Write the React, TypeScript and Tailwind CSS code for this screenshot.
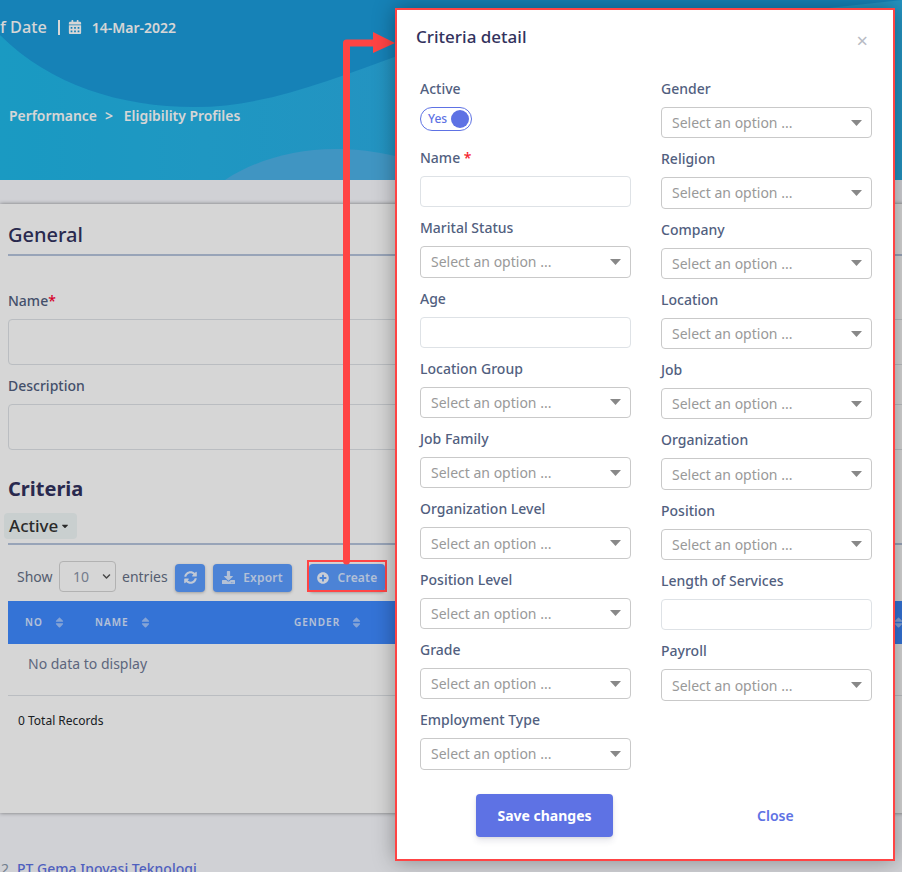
import { FaCalendarAlt, FaDownload, FaPlusCircle, FaSort, FaSyncAlt, FaCaretDown, FaChevronDown } from "react-icons/fa";

const leftFields = [
  { label: "Marital Status", kind: "select" },
  { label: "Age", kind: "input" },
  { label: "Location Group", kind: "select" },
  { label: "Job Family", kind: "select" },
  { label: "Organization Level", kind: "select" },
  { label: "Position Level", kind: "select" },
  { label: "Grade", kind: "select" },
  { label: "Employment Type", kind: "select" },
];

const rightFields = [
  { label: "Gender", kind: "select" },
  { label: "Religion", kind: "select" },
  { label: "Company", kind: "select" },
  { label: "Location", kind: "select" },
  { label: "Job", kind: "select" },
  { label: "Organization", kind: "select" },
  { label: "Position", kind: "select" },
  { label: "Length of Services", kind: "input" },
  { label: "Payroll", kind: "select" },
];

function Control({ kind }: { kind: string }) {
  if (kind === "input") {
    return <div className="h-[31.3px] rounded-[4px] border border-[#dee2e6] bg-white" />;
  }
  return (
    <div className="flex h-[31.3px] items-center justify-between rounded-[4px] border border-[#c9c9c9] bg-white pl-[10px] pr-[9px] text-[14px] text-[#999999]">
      <span>Select an option ...</span>
      <svg width="11" height="6" viewBox="0 0 11 6" aria-hidden>
        <polygon points="0,0 11,0 5.5,6" fill="#888888" />
      </svg>
    </div>
  );
}

function Field({ label, kind }: { label: string; kind: string }) {
  return (
    <div className="h-[70.3px]">
      <div className="h-[35px] pt-[7px] text-[14px] font-medium leading-[20px] text-[#525f7f]">{label}</div>
      <Control kind={kind} />
    </div>
  );
}

function HeaderWaves() {
  return (
    <svg className="absolute inset-0" width="902" height="180" viewBox="0 0 902 180" aria-hidden>
      <defs>
        <linearGradient id="base" x1="0" x2="1" y1="0" y2="0">
          <stop offset="0" stopColor="#1fb8e8" />
          <stop offset="0.45" stopColor="#2bb0e6" />
          <stop offset="1" stopColor="#2bb0e6" />
        </linearGradient>
      </defs>
      <rect width="902" height="180" fill="url(#base)" />
      <path d="M0 35C50 85 120 107 195 107C265 107 330 80 400 55L902 0V-10H0Z" fill="#1b9bdb" />
      <path d="M225 180C255 160 295 149 335 149C365 149 385 153 420 162L420 180Z" fill="#4db2e8" />
    </svg>
  );
}

function SortHead({ label, width }: { label: string; width: string }) {
  return (
    <div className={`flex items-center gap-[10px] ${width}`}>
      {label}
      <FaSort className="text-[13px] text-white/50" />
    </div>
  );
}

export default function App() {
  return (
    <div className="relative h-[872px] w-[902px] overflow-hidden bg-[#f8f9fe] font-['Noto_Sans',sans-serif]">
      <header className="relative h-[180px] text-white">
        <HeaderWaves />
        <div className="relative flex h-[54px] items-center">
          <span className="text-[16.3px] font-medium">f Date</span>
          <span className="ml-[11px] h-[15px] w-[2px] bg-white" />
          <FaCalendarAlt className="ml-[8px] text-[14px]" />
          <span className="ml-[10px] text-[14px] font-semibold">14-Mar-2022</span>
        </div>
        <div className="relative mt-[52px] flex h-[20px] items-center pl-[9px] text-[13.9px] font-semibold">
          <span>Performance</span>
          <span className="ml-[8px]">&gt;</span>
          <span className="ml-[11px]">Eligibility Profiles</span>
        </div>
      </header>

      <section className="mt-[24px] h-[609px] w-[940px] bg-white pl-[8px] pt-[16px] shadow-[0_0_4px_rgba(0,0,0,0.45)]">
        <h2 className="h-[30px] text-[20px] font-medium leading-[30px] text-[#32325d]">General</h2>
        <div className="mt-[4px] h-[2px] bg-[#b6c4dc]" />

        <div className="mt-[35px] h-[20px] text-[14px] font-medium leading-[20px] text-[#525f7f]">
          Name<span className="text-[#ff0033]">*</span>
        </div>
        <div className="mt-[8px] h-[46px] rounded-[4px] border border-[#dee2e6]" />
        <div className="mt-[11px] h-[20px] text-[14px] font-medium leading-[20px] text-[#525f7f]">Description</div>
        <div className="mt-[8px] h-[46px] rounded-[4px] border border-[#dee2e6]" />

        <h2 className="mt-[24px] h-[30px] text-[20px] font-bold leading-[30px] text-[#32325d]">Criteria</h2>
        <div className="-ml-[4px] mt-[9px] flex h-[26px] w-[73px] items-center rounded-[4px] bg-[#f0f7f7] pl-[5px] text-[17px] font-medium text-[#333333]">
          Active
          <FaCaretDown className="ml-[2px] text-[10px]" />
        </div>
        <div className="mt-[4px] h-[2px] bg-[#b6c4dc]" />

        <div className="mt-[16px] flex h-[31px] items-center pl-[9px] text-[14px] text-[#666f86]">
          <span className="w-[35px]">Show</span>
          <div className="ml-[7px] flex h-[31px] w-[57px] items-center justify-between rounded-[4px] border border-[#d5d5d5] pl-[13px] pr-[4px] text-[#8b94a8]">
            10
            <FaChevronDown className="text-[9px] text-[#555555]" />
          </div>
          <span className="ml-[6px] w-[45px]">entries</span>
          <button className="ml-[8px] mt-[2px] flex h-[28px] w-[30px] items-center justify-center rounded-[4px] bg-[#5b9cff] text-[13px] text-white/85 shadow-[0_1px_3px_rgba(0,0,0,0.25)]">
            <FaSyncAlt />
          </button>
          <button className="ml-[8px] mt-[2px] flex h-[28px] w-[79px] items-center justify-center gap-[8px] rounded-[4px] bg-[#5b9cff] text-[12px] font-semibold tracking-[0.2px] text-white/75 shadow-[0_1px_3px_rgba(0,0,0,0.25)]">
            <FaDownload className="text-[13px]" />
            Export
          </button>
          <button className="ml-[17px] mt-[2px] flex h-[28px] w-[76px] items-center justify-center gap-[9px] rounded-[4px] bg-[#5b9cff] text-[12px] font-semibold tracking-[0.2px] text-white/75 shadow-[0_1px_3px_rgba(0,0,0,0.25)]">
            <FaPlusCircle className="text-[12px] text-white/90" />
            Create
          </button>
        </div>

        <div className="mt-[9px] flex h-[43px] items-center bg-[#3f89ff] pl-[17px] text-[10px] font-semibold tracking-[1px] text-white/80">
          <SortHead label="NO" width="w-[70px]" />
          <SortHead label="NAME" width="w-[199px]" />
          <SortHead label="GENDER" width="w-[598px]" />
          <FaSort className="text-[13px] text-white/50" />
        </div>
        <div className="h-[52px] border-b border-[#dee2e6] pl-[20px] pt-[10px] text-[14px] leading-[20px] text-[#6f7a96]">
          No data to display
        </div>
        <div className="mt-[15px] pl-[10px] text-[12px] leading-[20px] text-[#212529]">0 Total Records</div>
      </section>

      <footer className="mt-[46px] flex h-[20px] items-center pl-[1px] text-[14px] leading-[20px]">
        <span className="text-[#8898aa]">2</span>
        <span className="ml-[8px] font-medium text-[#5e72e4]">PT Gema Inovasi Teknologi</span>
      </footer>

      {/* modal backdrop */}
      <div className="absolute inset-0 bg-black/[.16]" />

      {/* annotation arrow + highlight round the Create button */}
      <svg className="absolute left-0 top-0" width="902" height="872" viewBox="0 0 902 872" aria-hidden>
        <path d="M346.5 561V43H376" fill="none" stroke="#ff4444" strokeWidth="7" strokeLinecap="round" strokeLinejoin="round" />
        <polygon points="373,32 395,43 373,53" fill="#ff4444" />
      </svg>
      <div className="absolute left-[307px] top-[560px] h-[32px] w-[80px] border-2 border-[#ff4444]" />

      <div className="absolute left-[395px] top-[8px] h-[853px] w-[500px] border-2 border-[#ff4444] bg-white shadow-[0_0_20px_rgba(0,0,0,0.35)]">
        <div className="flex h-[62px] justify-between pl-[19px] pr-[25px] pt-[15px]">
          <h3 className="text-[17px] font-medium leading-[24px] text-[#32325d]">Criteria detail</h3>
          <span className="mt-[3px] text-[20px] leading-[26px] text-[#b8bbc4]">×</span>
        </div>
        <div className="flex gap-[30px] pl-[23px]">
          <div className="w-[211px]">
            <div className="h-[69px]">
              <div className="h-[35px] pt-[7px] text-[14px] font-medium leading-[20px] text-[#525f7f]">Active</div>
              <div className="flex h-[24px] w-[52px] items-center justify-between rounded-full border border-[#5e72e4] pl-[7px] pr-[2px] text-[12px] font-medium text-[#5e72e4]">
                Yes
                <span className="h-[18px] w-[18px] rounded-full bg-[#5e72e4]" />
              </div>
            </div>
            <div className="h-[70.25px]">
              <div className="h-[35px] pt-[7px] text-[14px] font-medium leading-[20px] text-[#525f7f]">
                Name <span className="text-[#f5222d]">*</span>
              </div>
              <Control kind="input" />
            </div>
            {leftFields.map((f) => (
              <Field key={f.label} label={f.label} kind={f.kind} />
            ))}
          </div>
          <div className="w-[211px]">
            {rightFields.map((f) => (
              <Field key={f.label} label={f.label} kind={f.kind} />
            ))}
          </div>
        </div>
        <div className="mt-[20.35px] flex items-center pl-[79px]">
          <button className="h-[43px] w-[137px] rounded-[4px] bg-[#5e72e4] text-[14px] font-bold text-white shadow-[0_4px_6px_rgba(50,50,93,0.11),0_1px_3px_rgba(0,0,0,0.08)]">
            Save changes
          </button>
          <button className="ml-[144px] text-[14px] font-semibold text-[#5e72e4]">Close</button>
        </div>
      </div>
    </div>
  );
}
